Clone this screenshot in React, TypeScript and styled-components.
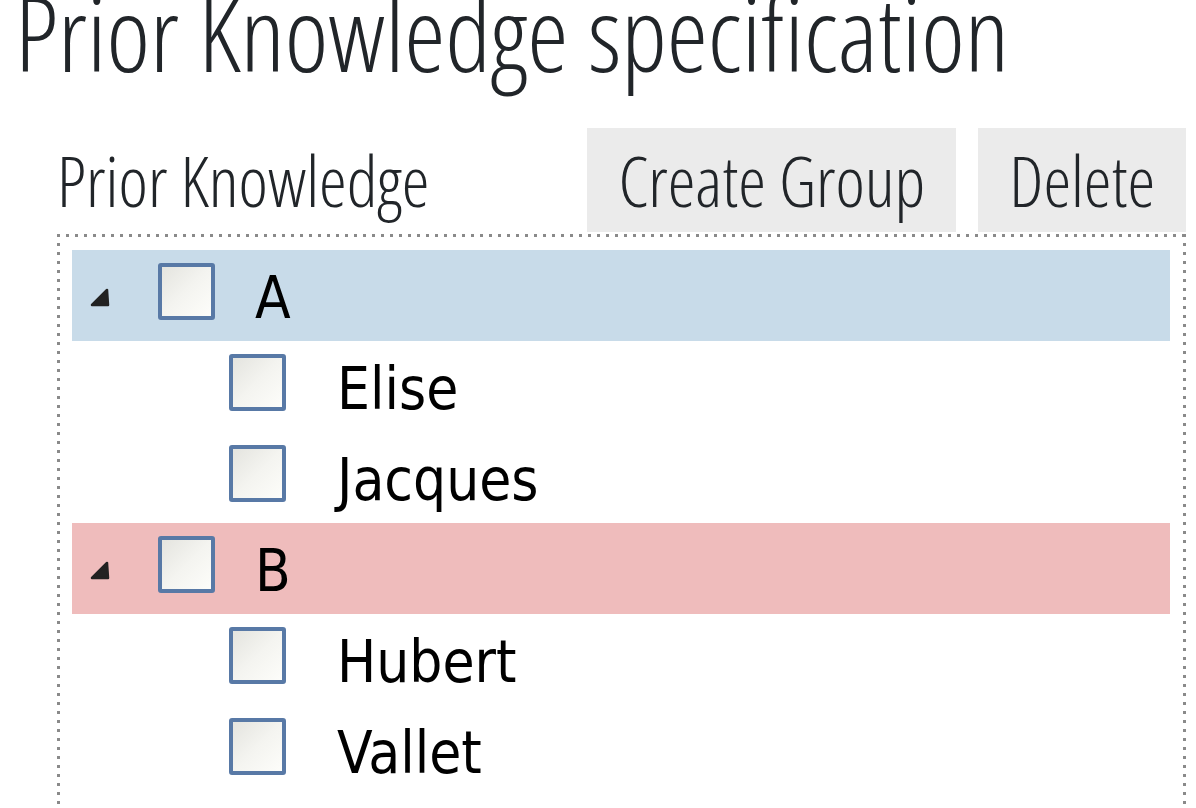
import React from "react";
import styled, { createGlobalStyle } from "styled-components";

const Global = createGlobalStyle`
  html, body { margin: 0; padding: 0; background: #fff; overflow: hidden; }
  body { font-family: "Open Sans", sans-serif; }
`;

const Page = styled.div`
  width: 1196px;
  height: 808px;
  overflow: hidden;
`;

const Title = styled.h1`
  margin: -20px 0 0 15px;
  font-family: "Open Sans", sans-serif;
  font-weight: 300;
  font-stretch: 75%;
  font-size: 104px;
  line-height: 1;
  color: #212529;
  white-space: nowrap;
`;

const Panel = styled.div`
  margin: 44px 0 0 57px;
  width: 1129px;
`;

const Toolbar = styled.div`
  display: flex;
  align-items: flex-end;
  gap: 22px;
  margin-bottom: 2px;
`;

const Label = styled.span`
  flex: 1;
  font-family: "Open Sans", sans-serif;
  font-weight: 300;
  font-stretch: 75%;
  font-size: 70px;
  line-height: 1;
  color: #212529;
  padding-bottom: 17px;
`;

const Button = styled.button`
  height: 104px;
  padding: 0 31px;
  border: none;
  background: #ebebeb;
  font-family: "Open Sans", sans-serif;
  font-weight: 300;
  font-stretch: 75%;
  font-size: 70px;
  line-height: 1;
  color: #212529;
`;

const dotsH = "repeating-linear-gradient(to right, #8a8a8a 0 3px, transparent 3px 9px)";
const dotsV = "repeating-linear-gradient(to bottom, #8a8a8a 0 3px, transparent 3px 9px)";

const TreeBox = styled.div`
  padding: 16px 16px 40px 15px;
  background:
    ${dotsH} left top / 100% 3px no-repeat,
    ${dotsV} left top / 3px 100% no-repeat,
    ${dotsV} right top / 3px 100% no-repeat,
    ${dotsH} left bottom / 100% 3px no-repeat;
`;

const Row = styled.div<{ $tone?: "blue" | "pink"; $child?: boolean }>`
  display: flex;
  align-items: center;
  height: 91px;
  padding-left: ${(p) => (p.$child ? 157 : 17)}px;
  background: ${(p) =>
    p.$tone === "blue" ? "#c8dbe9" : p.$tone === "pink" ? "#efbcbc" : "transparent"};
`;

const Toggle = styled.svg`
  width: 22px;
  height: 22px;
  margin-right: 47px;
  margin-top: 2px;
`;

const Box = styled.span`
  box-sizing: border-box;
  width: 57px;
  height: 57px;
  margin-bottom: 9px;
  border: 4px solid #5879a6;
  border-radius: 3px;
  background: linear-gradient(135deg, #e4e4df 0%, #f4f4f0 50%, #fdfdfa 100%);
  flex-shrink: 0;
`;

const Name = styled.span<{ $child?: boolean }>`
  margin-left: ${(p) => (p.$child ? 51 : 40)}px;
  font-family: "DejaVu Sans Condensed", "DejaVu Sans", sans-serif;
  font-stretch: condensed;
  font-size: 58px;
  line-height: 1;
  color: #000;
  margin-top: 4px;
`;

const groups = [
  { name: "A", tone: "blue" as const, members: ["Elise", "Jacques"] },
  { name: "B", tone: "pink" as const, members: ["Hubert", "Vallet"] },
];

export default function App() {
  return (
    <Page>
      <Global />
      <Title>Prior Knowledge specification</Title>
      <Panel>
        <Toolbar>
          <Label>Prior Knowledge</Label>
          <Button>Create Group</Button>
          <Button>Delete</Button>
        </Toolbar>
        <TreeBox>
          {groups.map((g) => (
            <React.Fragment key={g.name}>
              <Row $tone={g.tone}>
                <Toggle viewBox="0 0 22 22">
                  <path d="M3 19 L18 4 L19 19 Z" fill="#222" stroke="#222" strokeWidth="2.5" strokeLinejoin="round" />
                </Toggle>
                <Box />
                <Name>{g.name}</Name>
              </Row>
              {g.members.map((m) => (
                <Row key={m} $child>
                  <Box />
                  <Name $child>{m}</Name>
                </Row>
              ))}
            </React.Fragment>
          ))}
        </TreeBox>
      </Panel>
    </Page>
  );
}
